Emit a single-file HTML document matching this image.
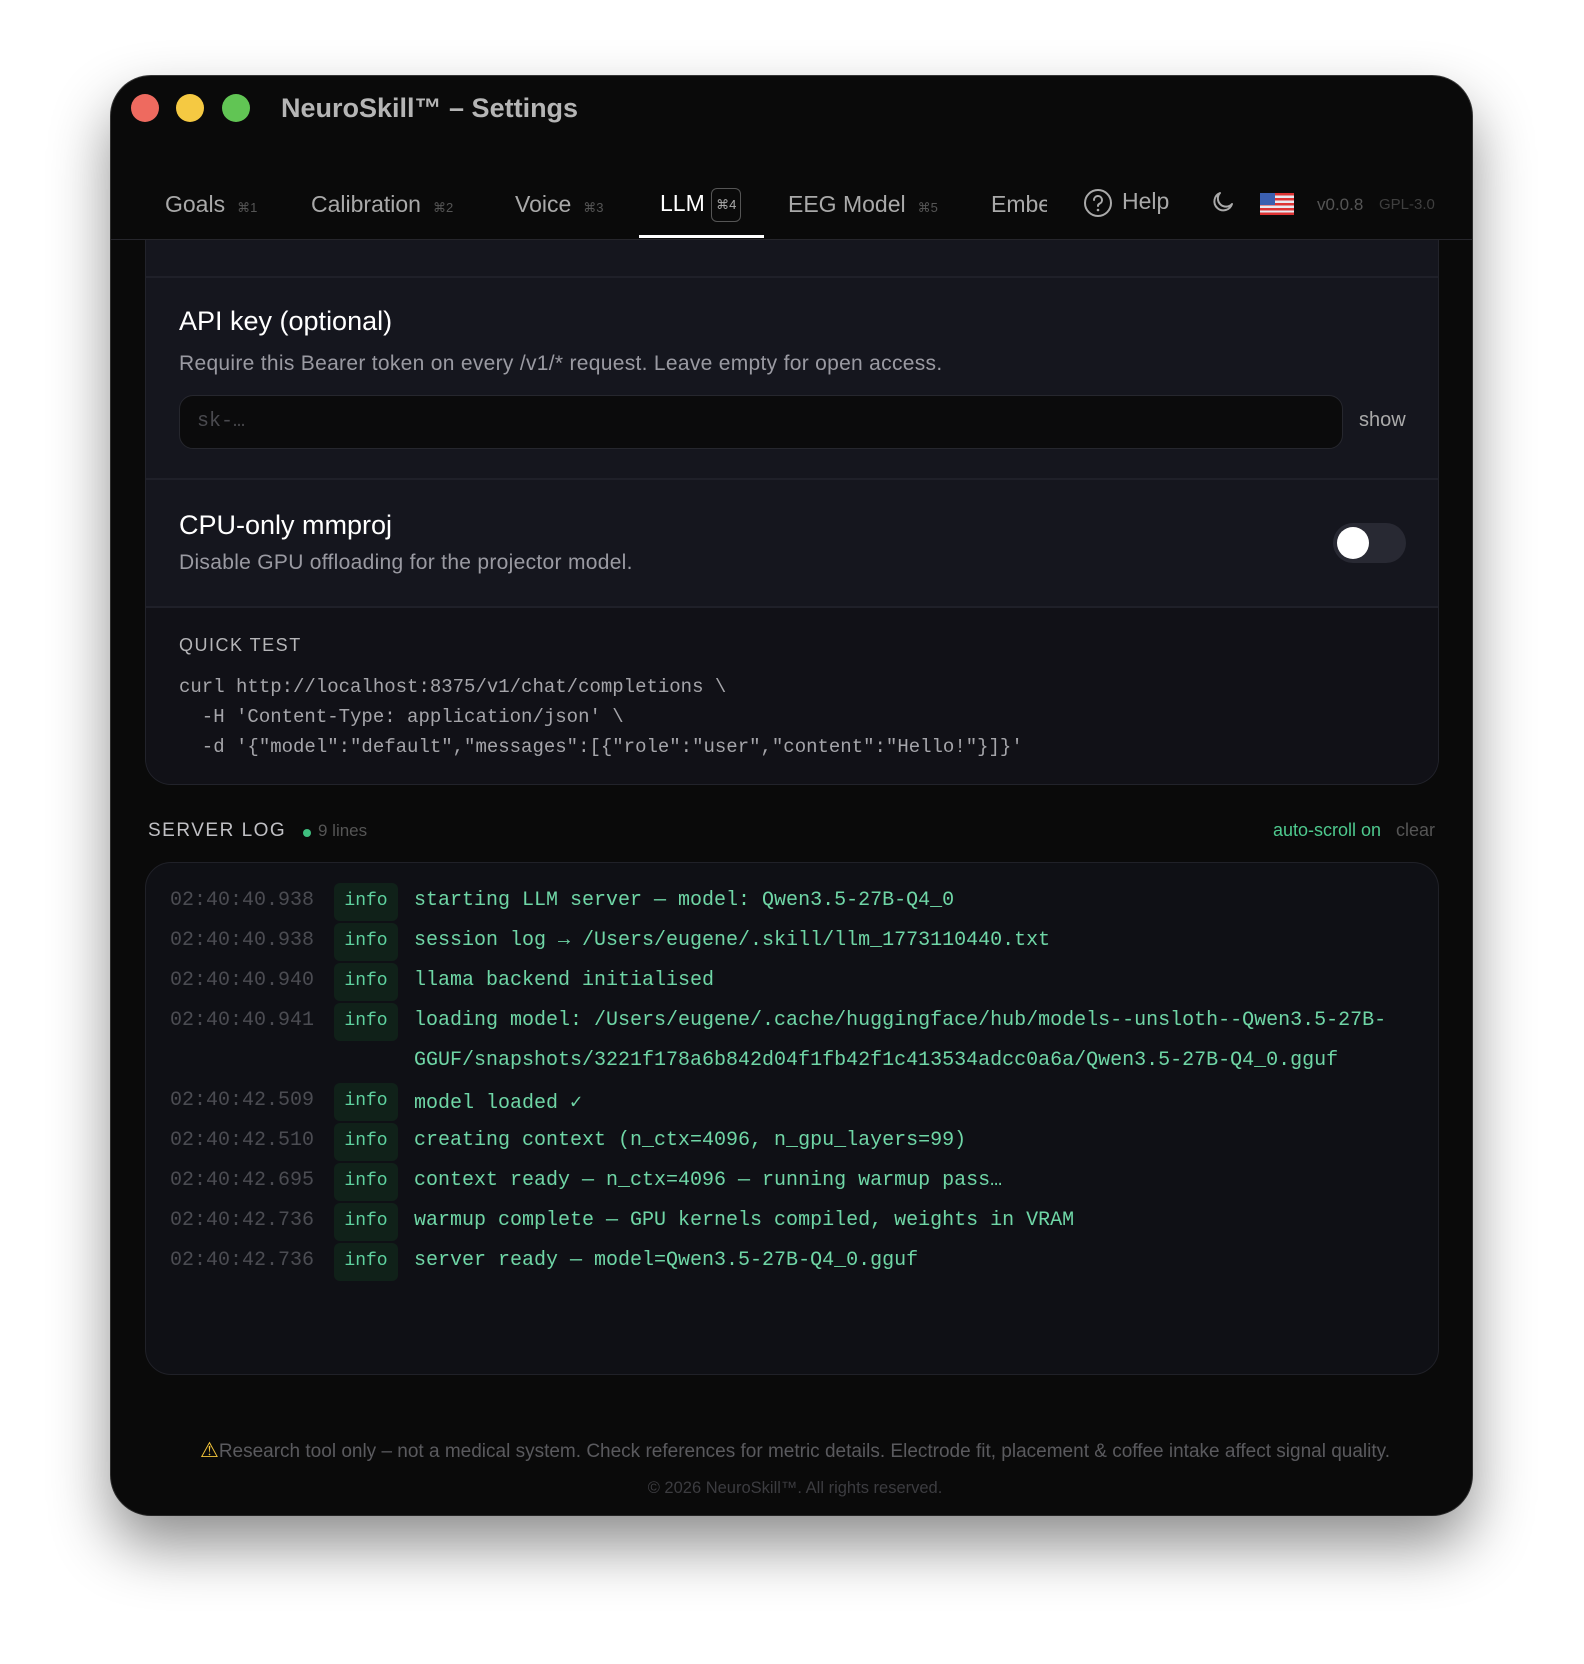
<!DOCTYPE html>
<html><head><meta charset="utf-8"><style>
*{margin:0;padding:0;box-sizing:border-box}
body{width:1584px;height:1664px;background:#fff;font-family:"Liberation Sans",sans-serif;position:relative;overflow:hidden}
.win{position:absolute;left:111px;top:76px;width:1361px;height:1439px;background:#0a0a0a;border-radius:40px;box-shadow:0 30px 60px rgba(0,0,0,.45),0 0 0 1px #3a3a3a;overflow:hidden}
.a{position:absolute;white-space:nowrap}
.dot{position:absolute;top:18px;width:28px;height:28px;border-radius:50%}
.tab{position:absolute;top:114px;font-size:23px;color:#a9a9a9;line-height:28px;white-space:nowrap}
.tab small{font-size:13px;color:#555;margin-left:12px}
.panel{position:absolute;left:145px;top:240px;width:1294px;height:545px;background:#15161e;border:1px solid #22232b;border-top:none;border-radius:0 0 26px 26px;overflow:hidden}
.mono{font-family:"Liberation Mono",monospace}
.row{position:absolute;left:0;height:40px;width:100%}
.ts{position:absolute;left:24px;top:6px;font-size:20px;color:#4b4c52}
.bd{position:absolute;left:188px;top:0;width:64px;height:38px;background:#102119;border-radius:6px;color:#5fd3a0;font-size:18px;text-align:center;line-height:36px}
.msg{position:absolute;left:268px;top:6px;font-size:20px;color:#6fd6a6}
</style></head><body>
<div class="win">
<div class="dot" style="left:20px;background:#ee6a5f"></div>
<div class="dot" style="left:65px;background:#f5c942"></div>
<div class="dot" style="left:111px;background:#61c554"></div>
<div class="a" style="left:170px;top:17px;font-size:27px;font-weight:bold;color:#b5b5b5">NeuroSkill™ – Settings</div>

<div class="tab" style="left:54px">Goals<small>⌘1</small></div>
<div class="tab" style="left:200px">Calibration<small>⌘2</small></div>
<div class="tab" style="left:404px">Voice<small>⌘3</small></div>
<div class="tab" style="left:549px;color:#fff;top:112px">LLM <span style="display:inline-block;font-size:13px;color:#aaa;border:1.5px solid #555;border-radius:6px;padding:2px 4px;vertical-align:2px">⌘4</span></div>
<div style="position:absolute;left:528px;top:159px;width:125px;height:3px;background:#fff"></div>
<div class="tab" style="left:677px">EEG Model<small>⌘5</small></div>
<div class="tab" style="left:880px;width:56px;overflow:hidden">Embeddings</div>
<svg class="a" style="left:972px;top:112px" width="30" height="30" viewBox="0 0 30 30"><circle cx="15" cy="15" r="13" fill="none" stroke="#aaa" stroke-width="2"/><path d="M11 12a4 4 0 1 1 5.5 3.7c-1 .5-1.5 1.2-1.5 2.3" fill="none" stroke="#aaa" stroke-width="2" stroke-linecap="round"/><circle cx="15" cy="22" r="1.3" fill="#aaa"/></svg>
<div class="tab" style="left:1011px;top:111px">Help</div>
<svg class="a" style="left:1100px;top:114px" width="24" height="24" viewBox="0 0 24 24"><path d="M9 3a9 9 0 1 0 12 11A7 7 0 0 1 9 3z" fill="none" stroke="#aaa" stroke-width="2" stroke-linejoin="round"/></svg>
<svg class="a" style="left:1149px;top:117px" width="34" height="22" viewBox="0 0 34 22"><rect width="34" height="22" rx="3" fill="#e8e8f0"/><g fill="#d33"><rect y="0" width="34" height="2.5"/><rect y="5" width="34" height="2.5"/><rect y="10" width="34" height="2.5"/><rect y="15" width="34" height="2.5"/><rect y="19.5" width="34" height="2.5"/></g><rect width="15" height="12" fill="#3b5fb0"/></svg>
<div class="a" style="left:1206px;top:119px;font-size:17px;color:#555">v0.0.8</div>
<div class="a" style="left:1268px;top:120px;font-size:15px;color:#3f3f3f">GPL-3.0</div>
<div style="position:absolute;left:0;top:163px;width:100%;height:1px;background:#26262c"></div>

<div class="panel" style="left:34px;top:164px">
 <div style="position:absolute;left:0;top:36px;width:100%;height:2px;background:#1f2029"></div>
 <div class="a" style="left:33px;top:66px;font-size:27px;color:#fff">API key (optional)</div>
 <div class="a" style="left:33px;top:112px;font-size:21px;color:#9a9aa2;letter-spacing:0.3px">Require this Bearer token on every /v1/* request. Leave empty for open access.</div>
 <div style="position:absolute;left:33px;top:155px;width:1164px;height:54px;background:#0b0b0c;border:1px solid #26272e;border-radius:14px"></div>
 <div class="a mono" style="left:51px;top:170px;font-size:20px;color:#4a4a4f">sk-…</div>
 <div class="a" style="left:1213px;top:169px;font-size:20px;color:#aaa">show</div>
 <div style="position:absolute;left:0;top:238px;width:100%;height:2px;background:#1f2029"></div>
 <div class="a" style="left:33px;top:270px;font-size:27px;color:#fff">CPU-only mmproj</div>
 <div class="a" style="left:33px;top:311px;font-size:21px;color:#9a9aa2;letter-spacing:0.3px">Disable GPU offloading for the projector model.</div>
 <div style="position:absolute;left:1187px;top:283px;width:73px;height:40px;background:#282933;border-radius:20px"></div>
 <div style="position:absolute;left:1191px;top:287px;width:32px;height:32px;background:#fff;border-radius:50%"></div>
 <div style="position:absolute;left:0;top:366px;width:100%;height:180px;background:#111117;border-top:2px solid #1f2029"></div>
 <div class="a" style="left:33px;top:395px;font-size:18px;letter-spacing:1.5px;color:#b5b5b8">QUICK TEST</div>
 <div class="a mono" style="left:33px;top:432px;font-size:19px;line-height:30px;color:#a5a5aa;white-space:pre">curl http://localhost:8375/v1/chat/completions \
  -H 'Content-Type: application/json' \
  -d '{"model":"default","messages":[{"role":"user","content":"Hello!"}]}'</div>
</div>

<div class="a" style="left:37px;top:744px;font-size:19px;letter-spacing:1.5px;color:#c0c0c4">SERVER LOG</div>
<div style="position:absolute;left:192px;top:753px;width:8px;height:8px;border-radius:50%;background:#3fbf7f"></div>
<div class="a" style="left:207px;top:745px;font-size:17px;color:#555">9 lines</div>
<div class="a" style="left:1162px;top:744px;font-size:18px;color:#4ec98e">auto-scroll on</div>
<div class="a" style="left:1285px;top:744px;font-size:18px;color:#555">clear</div>

<div class="mono" style="position:absolute;left:34px;top:786px;width:1294px;height:513px;background:#0f1015;border:1px solid #202128;border-radius:26px">
 <div class="row" style="top:20px"><span class="ts">02:40:40.938</span><span class="bd">info</span><span class="msg">starting LLM server — model: Qwen3.5-27B-Q4_0</span></div>
 <div class="row" style="top:60px"><span class="ts">02:40:40.938</span><span class="bd">info</span><span class="msg">session log → /Users/eugene/.skill/llm_1773110440.txt</span></div>
 <div class="row" style="top:100px"><span class="ts">02:40:40.940</span><span class="bd">info</span><span class="msg">llama backend initialised</span></div>
 <div class="row" style="top:140px"><span class="ts">02:40:40.941</span><span class="bd">info</span><span class="msg">loading model: /Users/eugene/.cache/huggingface/hub/models--unsloth--Qwen3.5-27B-</span></div>
 <div class="row" style="top:180px"><span class="msg">GGUF/snapshots/3221f178a6b842d04f1fb42f1c413534adcc0a6a/Qwen3.5-27B-Q4_0.gguf</span></div>
 <div class="row" style="top:220px"><span class="ts">02:40:42.509</span><span class="bd">info</span><span class="msg">model loaded ✓</span></div>
 <div class="row" style="top:260px"><span class="ts">02:40:42.510</span><span class="bd">info</span><span class="msg">creating context (n_ctx=4096, n_gpu_layers=99)</span></div>
 <div class="row" style="top:300px"><span class="ts">02:40:42.695</span><span class="bd">info</span><span class="msg">context ready — n_ctx=4096 — running warmup pass…</span></div>
 <div class="row" style="top:340px"><span class="ts">02:40:42.736</span><span class="bd">info</span><span class="msg">warmup complete — GPU kernels compiled, weights in VRAM</span></div>
 <div class="row" style="top:380px"><span class="ts">02:40:42.736</span><span class="bd">info</span><span class="msg">server ready — model=Qwen3.5-27B-Q4_0.gguf</span></div>
</div>

<div class="a" style="left:0;width:1368px;text-align:center;top:1362px;font-size:19px;color:#5a5a5e"><span style="color:#f3c43a;font-size:21px">⚠</span>Research tool only – not a medical system. Check references for metric details. Electrode fit, placement &amp; coffee intake affect signal quality.</div>
<div class="a" style="left:0;width:1368px;text-align:center;top:1403px;font-size:16.5px;color:#3c3c40">© 2026 NeuroSkill™. All rights reserved.</div>
</div>
</body></html>
